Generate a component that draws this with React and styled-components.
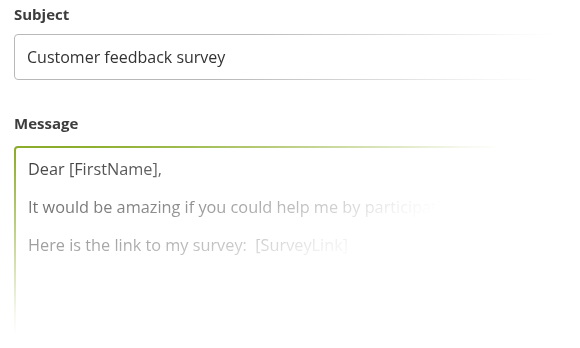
import styled, { createGlobalStyle } from 'styled-components';

const GlobalStyle = createGlobalStyle`
  html, body {
    margin: 0;
    padding: 0;
    background: #ffffff;
    overflow: hidden;
  }
  body {
    font-family: 'Open Sans', 'Noto Sans', sans-serif;
  }
`;

const App = () => {
  return (
    <>
      <GlobalStyle />
      <StFadeArea>
        <StField>
          <StLabel>Subject</StLabel>
          <StInputBox>Customer feedback survey</StInputBox>
        </StField>
        <StField $gap="12px">
          <StLabel>Message</StLabel>
          <StMessageBox>
            <StParagraph>Dear [FirstName],</StParagraph>
            <StParagraph>It would be amazing if you could help me by participating</StParagraph>
            <StParagraph>Here is the link to my survey:&nbsp; [SurveyLink]</StParagraph>
          </StMessageBox>
        </StField>
      </StFadeArea>
    </>
  );
};

const StFadeArea = styled.div`
  display: flex;
  flex-direction: column;
  gap: 32px;
  width: 580px;
  height: 348px;
  padding: 3px 0 0 14px;
  box-sizing: border-box;
  overflow: hidden;
  -webkit-mask-image: radial-gradient(ellipse 575px 345px at 0 0, #000 44%, rgba(0, 0, 0, 0.3) 80%, rgba(0, 0, 0, 0.08) 91%, transparent 97%);
  mask-image: radial-gradient(ellipse 575px 345px at 0 0, #000 44%, rgba(0, 0, 0, 0.3) 80%, rgba(0, 0, 0, 0.08) 91%, transparent 97%);
`;

const StField = styled.div`
  display: flex;
  flex-direction: column;
  gap: ${({ $gap }) => $gap || '9px'};
`;

const StLabel = styled.label`
  font-size: 15px;
  font-weight: 700;
  line-height: 22px;
  color: #3d3d3d;
`;

const StInputBox = styled.div`
  width: 600px;
  height: 46px;
  box-sizing: border-box;
  display: flex;
  align-items: center;
  padding: 0 12px;
  border: 1px solid #b8b8b8;
  border-radius: 4px;
  font-size: 16px;
  color: #333333;
`;

const StMessageBox = styled.div`
  width: 600px;
  height: 240px;
  box-sizing: border-box;
  display: flex;
  flex-direction: column;
  gap: 16px;
  padding: 10px 12px;
  border: 2px solid #8cad2b;
  border-radius: 4px;
`;

const StParagraph = styled.p`
  margin: 0;
  font-size: 16.3px;
  line-height: 22px;
  color: #333333;
  white-space: nowrap;
`;

export default App;
